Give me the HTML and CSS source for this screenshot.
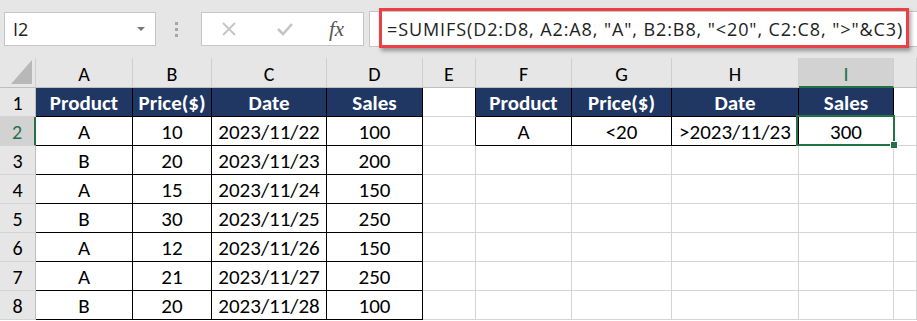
FILE: index.html
```html
<!DOCTYPE html>
<html lang="en">
  <head>
    <meta charset="UTF-8" />
    <title>SUMIFS example</title>
    <link rel="stylesheet" href="styles.css">
  </head>
  <body>
    <div class="toolbar">
      <div class="name-box">
        <span>I2</span>
        <span class="caret"></span>
      </div>
      <div class="grip"><i></i><i></i><i></i></div>
      <div class="fx-box">
        <svg class="icon" width="14" height="14" viewBox="0 0 14 14">
          <path d="M1 1 L13 13 M13 1 L1 13" stroke="#c4c4c4" stroke-width="1.8" fill="none" />
        </svg>
        <svg class="icon" width="16" height="14" viewBox="0 0 16 14">
          <path d="M1 7 L6 12 L15 2" stroke="#c4c4c4" stroke-width="2.6" fill="none" />
        </svg>
        <span class="fx">fx</span>
      </div>
      <div class="formula">
        <span class="formula-text">=SUMIFS(D2:D8, A2:A8, "A", B2:B8, "&lt;20", C2:C8, "&gt;"&amp;C3)</span>
        <div class="highlight"></div>
      </div>
    </div>

    <div class="sheet">
      <div class="hd corner"><span class="tri"></span></div>
      <div class="hd">A</div>
      <div class="hd">B</div>
      <div class="hd">C</div>
      <div class="hd">D</div>
      <div class="hd">E</div>
      <div class="hd">F</div>
      <div class="hd">G</div>
      <div class="hd">H</div>
      <div class="hd active">I</div>
      <div class="hd"></div>

      <div class="rh">1</div>
      <div class="c th">Product</div>
      <div class="c th">Price($)</div>
      <div class="c th">Date</div>
      <div class="c th">Sales</div>
      <div class="c edge"></div>
      <div class="c th">Product</div>
      <div class="c th">Price($)</div>
      <div class="c th">Date</div>
      <div class="c th">Sales</div>
      <div class="c"></div>

      <div class="rh active">2</div>
      <div class="c td">A</div>
      <div class="c td">10</div>
      <div class="c td">2023/11/22</div>
      <div class="c td">100</div>
      <div class="c edge"></div>
      <div class="c td">A</div>
      <div class="c td">&lt;20</div>
      <div class="c td">&gt;2023/11/23</div>
      <div class="c td selected">300<span class="sel"><span class="handle"></span></span></div>
      <div class="c"></div>

      <div class="rh">3</div>
      <div class="c td">B</div>
      <div class="c td">20</div>
      <div class="c td">2023/11/23</div>
      <div class="c td">200</div>
      <div class="c"></div><div class="c"></div><div class="c"></div><div class="c"></div><div class="c"></div><div class="c"></div>

      <div class="rh">4</div>
      <div class="c td">A</div>
      <div class="c td">15</div>
      <div class="c td">2023/11/24</div>
      <div class="c td">150</div>
      <div class="c"></div><div class="c"></div><div class="c"></div><div class="c"></div><div class="c"></div><div class="c"></div>

      <div class="rh">5</div>
      <div class="c td">B</div>
      <div class="c td">30</div>
      <div class="c td">2023/11/25</div>
      <div class="c td">250</div>
      <div class="c"></div><div class="c"></div><div class="c"></div><div class="c"></div><div class="c"></div><div class="c"></div>

      <div class="rh">6</div>
      <div class="c td">A</div>
      <div class="c td">12</div>
      <div class="c td">2023/11/26</div>
      <div class="c td">150</div>
      <div class="c"></div><div class="c"></div><div class="c"></div><div class="c"></div><div class="c"></div><div class="c"></div>

      <div class="rh">7</div>
      <div class="c td">A</div>
      <div class="c td">21</div>
      <div class="c td">2023/11/27</div>
      <div class="c td">250</div>
      <div class="c"></div><div class="c"></div><div class="c"></div><div class="c"></div><div class="c"></div><div class="c"></div>

      <div class="rh">8</div>
      <div class="c td">B</div>
      <div class="c td">20</div>
      <div class="c td">2023/11/28</div>
      <div class="c td">100</div>
      <div class="c"></div><div class="c"></div><div class="c"></div><div class="c"></div><div class="c"></div><div class="c"></div>
    </div>
  </body>
</html>
```

FILE: styles.css
```css
body {
  margin: 0;
  background-color: #fff;
  font-family: Carlito, Lato, "Liberation Sans", sans-serif;
  color: #000;
  overflow: hidden;
}
.toolbar {
  display: flex;
  align-items: center;
  height: 58px;
  padding-left: 4px;
  background-color: #e6e6e6;
  box-sizing: border-box;
}
.name-box {
  display: flex;
  align-items: center;
  justify-content: space-between;
  width: 152px;
  height: 34px;
  padding: 0 10px 0 8px;
  box-sizing: border-box;
  background-color: #fff;
  border: 1px solid #c6c6c6;
  font-family: "Open Sans", "Noto Sans", sans-serif;
  font-size: 18px;
  color: #222;
}
.caret {
  width: 0;
  height: 0;
  border-left: 4px solid transparent;
  border-right: 4px solid transparent;
  border-top: 4px solid #777;
}
.grip {
  display: flex;
  flex-direction: column;
  gap: 3px;
  margin: 0 23px 0 19px;
}
.grip i {
  display: block;
  width: 3px;
  height: 3px;
  background-color: #a6a6a6;
}
.fx-box {
  display: flex;
  align-items: center;
  width: 163px;
  height: 34px;
  padding-left: 20px;
  box-sizing: border-box;
  background-color: #fff;
  border: 1px solid #c6c6c6;
}
.fx-box .icon:first-child {
  margin-right: 41px;
}
.fx {
  margin-left: 36px;
  font-family: "Liberation Serif", serif;
  font-style: italic;
  font-size: 21px;
  color: #555;
}
.formula {
  position: relative;
  flex: 1;
  height: 34px;
  margin-left: 5px;
  padding-left: 17px;
  display: flex;
  align-items: center;
  background-color: #fff;
  border: 1px solid #c6c6c6;
  border-right: none;
}
.formula-text {
  font-family: "Open Sans", "Noto Sans", sans-serif;
  font-size: 18px;
  letter-spacing: 0.9px;
  color: #222;
  white-space: nowrap;
}
.highlight {
  position: absolute;
  left: 9px;
  top: -4px;
  width: 530px;
  height: 40px;
  box-sizing: border-box;
  border: 3px solid #ea4046;
  box-shadow: 2px 3px 4px rgba(0, 0, 0, 0.35);
}
.sheet {
  display: grid;
  grid-template-columns: 36px 97px 79px 115px 96px 53px 96px 100px 127px 95px 23px;
  grid-template-rows: 30px repeat(8, 29px);
  font-size: 21px;
}
.hd,
.rh,
.c {
  display: flex;
  align-items: center;
  justify-content: center;
  box-sizing: border-box;
  border-right: 1px solid #d4d4d4;
  border-bottom: 1px solid #d4d4d4;
}
.c {
  padding-top: 2px;
}
.hd,
.rh {
  font-size: 20px;
}
.hd {
  background-color: #e6e6e6;
  border-right-color: #cfcfcf;
  border-bottom-color: #bfbfbf;
  padding-top: 3px;
}
.hd.active {
  background-color: #d2d2d2;
  color: #217346;
  border-bottom: 2px solid #217346;
}
.corner {
  position: relative;
}
.tri {
  position: absolute;
  right: 3px;
  bottom: 3px;
  width: 21px;
  height: 24px;
  background-color: #b8b8b8;
  clip-path: polygon(100% 0, 100% 100%, 0 100%);
}
.rh {
  background-color: #e6e6e6;
  border-right-color: #bfbfbf;
  padding-top: 2px;
}
.rh.active {
  background-color: #d2d2d2;
  color: #217346;
  border-right: 2px solid #217346;
}
.th {
  background-color: #203764;
  color: #fff;
  font-weight: bold;
  border-right-color: #000;
  border-bottom-color: #000;
}
.td {
  border-right-color: #000;
  border-bottom-color: #000;
}
.edge {
  border-right-color: #000;
}
.selected {
  position: relative;
}
.sel {
  position: absolute;
  left: -3px;
  top: -2px;
  right: -2px;
  bottom: -1px;
  border: 2px solid #217346;
}
.handle {
  position: absolute;
  right: -5px;
  bottom: -5px;
  width: 6px;
  height: 6px;
  background-color: #217346;
  border: 1px solid #fff;
}
```
